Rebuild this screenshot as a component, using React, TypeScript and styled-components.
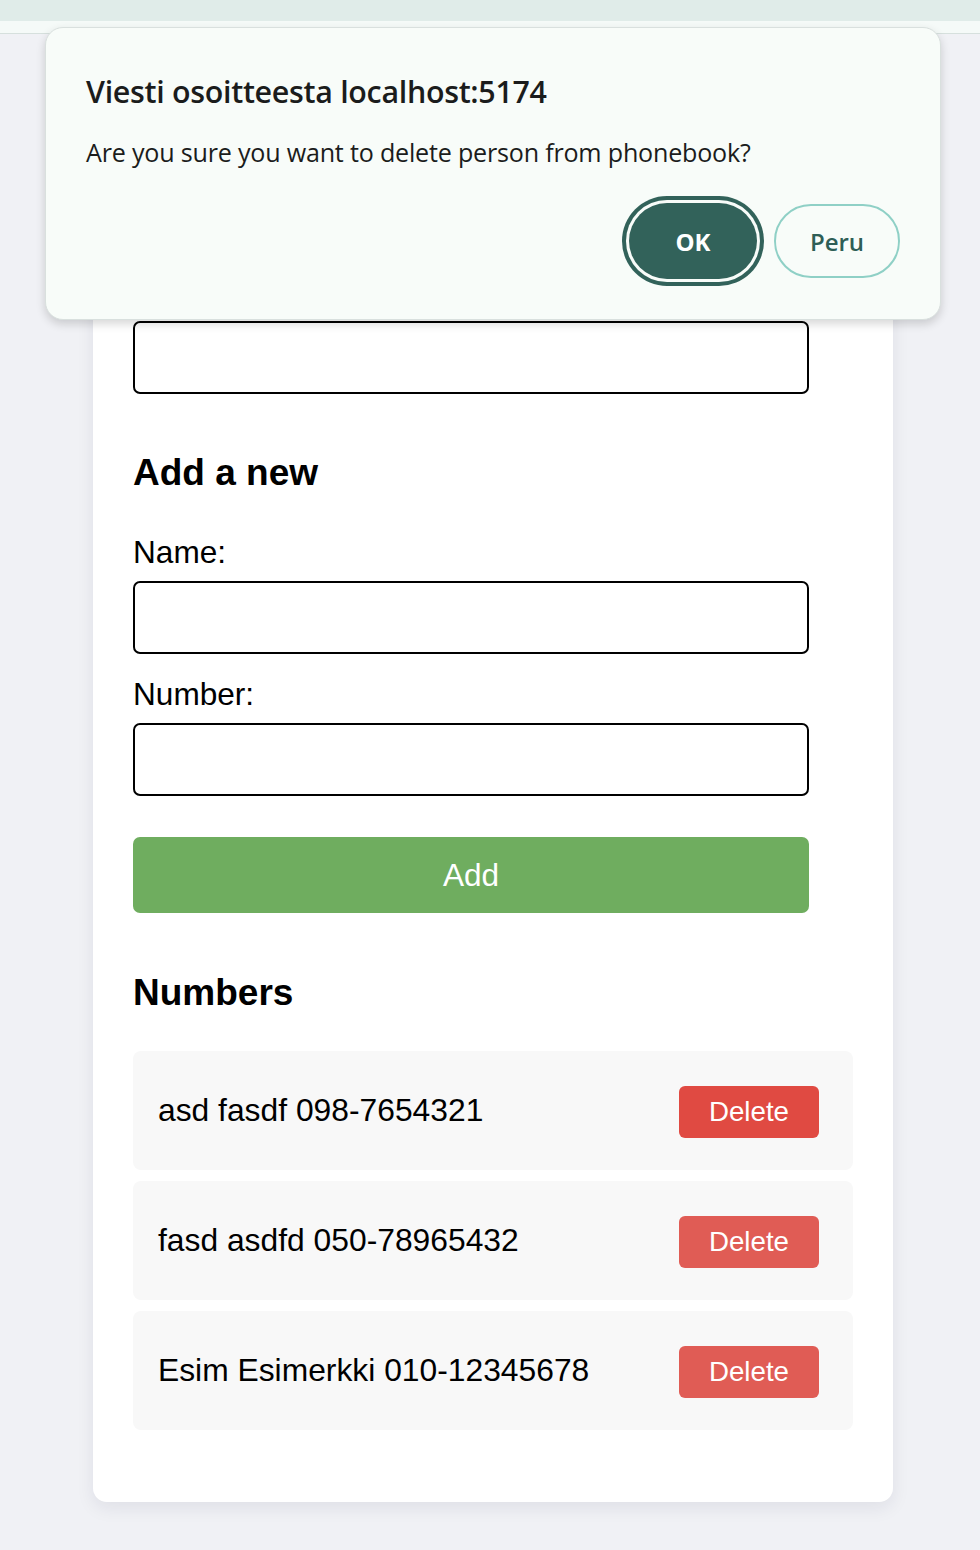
import React from "react";
import styled, { createGlobalStyle } from "styled-components";

const Global = createGlobalStyle`
  html, body { margin: 0; padding: 0; background: #f0f1f5; }
  body { font-family: "Liberation Sans", Arial, sans-serif; color: #000; }
  * { box-sizing: border-box; }
`;

const Page = styled.div`
  position: relative;
  width: 980px;
  height: 1550px;
  overflow: hidden;
`;

const ChromeBar = styled.div`
  height: 21px;
  background: #e0ece9;
`;

const ChromeStrip = styled.div`
  height: 13px;
  background: #f5faf8;
  border-bottom: 1px solid #d6e0dd;
`;

const Card = styled.main`
  width: 800px;
  margin: 217px 0 0 93px;
  background: #fff;
  border-radius: 14px;
  box-shadow: 0 6px 18px rgba(20, 30, 60, 0.08);
  padding: 70px 40px 72px 40px;
`;

const Heading = styled.h2<{ $top: number; $bottom: number }>`
  margin: ${(p) => p.$top}px 0 ${(p) => p.$bottom}px;
  font-size: 37px;
  line-height: 42px;
  font-weight: 700;
`;

const Label = styled.label`
  display: block;
  font-size: 31.6px;
  line-height: 37px;
  margin-bottom: 10px;
`;

const Field = styled.div<{ $gap: number }>`
  margin-bottom: ${(p) => p.$gap}px;
`;

const Input = styled.input`
  display: block;
  width: 676px;
  height: 73px;
  border: 2px solid #000;
  border-radius: 7px;
  background: #fff;
  font-size: 28px;
  padding: 0 12px;
  outline: none;
`;

const AddButton = styled.button`
  display: block;
  width: 676px;
  height: 76px;
  margin-top: 41px;
  border: none;
  border-radius: 7px;
  background: #6fad5f;
  color: #fff;
  font-family: "Liberation Sans", Arial, sans-serif;
  font-size: 31.6px;
`;

const List = styled.ul`
  list-style: none;
  margin: 0;
  padding: 0;
  display: flex;
  flex-direction: column;
  gap: 11px;
`;

const Row = styled.li`
  height: 119px;
  background: #f8f8f8;
  border-radius: 8px;
  display: flex;
  align-items: center;
  justify-content: space-between;
  padding: 0 34px 0 25px;
  font-size: 31.8px;
`;

const DeleteButton = styled.button<{ $primary?: boolean }>`
  width: 140px;
  height: 52px;
  border: none;
  border-radius: 6px;
  background: ${(p) => (p.$primary ? "#e04a42" : "#e05c55")};
  color: #fff;
  font-family: "Liberation Sans", Arial, sans-serif;
  font-size: 27.7px;
  margin-top: 2px;
`;

const Dialog = styled.div`
  position: absolute;
  top: 27px;
  left: 45px;
  width: 896px;
  height: 293px;
  background: #f8fcf9;
  border: 1px solid #d9e0de;
  border-radius: 18px;
  box-shadow: 0 4px 10px rgba(0, 0, 0, 0.16);
  padding: 0 40px 0 40px;
  font-family: "Open Sans", "Noto Sans", sans-serif;
  color: #1b1c1c;
`;

const DialogTitle = styled.div`
  margin-top: 44px;
  font-size: 30.4px;
  font-weight: 600;
  line-height: 40px;
  letter-spacing: -0.3px;
`;

const DialogText = styled.div`
  margin-top: 24px;
  font-size: 25.1px;
  line-height: 32px;
  letter-spacing: -0.2px;
`;

const Actions = styled.div`
  display: flex;
  justify-content: flex-end;
  align-items: center;
  gap: 17px;
  margin-top: 35px;
`;

const OkButton = styled.button`
  width: 128px;
  height: 76px;
  border: none;
  border-radius: 38px;
  background: #32625a;
  color: #fff;
  font-family: "Open Sans", "Noto Sans", sans-serif;
  font-weight: 700;
  font-size: 24px;
  box-shadow: 0 0 0 3px #f8fcf9, 0 0 0 7px #32625a;
`;

const CancelButton = styled.button`
  width: 126px;
  height: 74px;
  border: 2px solid #8fd0c6;
  border-radius: 37px;
  background: #f8fcf9;
  color: #2e5e56;
  font-family: "Open Sans", "Noto Sans", sans-serif;
  font-weight: 600;
  font-size: 24px;
`;

const persons = [
  { name: "asd fasdf", number: "098-7654321" },
  { name: "fasd asdfd", number: "050-78965432" },
  { name: "Esim Esimerkki", number: "010-12345678" },
];

export default function App() {
  return (
    <Page>
      <Global />
      <ChromeBar />
      <ChromeStrip />
      <Card>
        <Input aria-label="filter shown with" />
        <Heading $top={58} $bottom={40}>
          Add a new
        </Heading>
        <form onSubmit={(e) => e.preventDefault()}>
          <Field $gap={22}>
            <Label>Name:</Label>
            <Input />
          </Field>
          <Field $gap={0}>
            <Label>Number:</Label>
            <Input />
          </Field>
          <AddButton type="submit">Add</AddButton>
        </form>
        <Heading $top={59} $bottom={37}>
          Numbers
        </Heading>
        <List>
          {persons.map((p, i) => (
            <Row key={p.number}>
              <span>
                {p.name} {p.number}
              </span>
              <DeleteButton $primary={i === 0}>Delete</DeleteButton>
            </Row>
          ))}
        </List>
      </Card>
      <Dialog role="alertdialog">
        <DialogTitle>Viesti osoitteesta localhost:5174</DialogTitle>
        <DialogText>Are you sure you want to delete person from phonebook?</DialogText>
        <Actions>
          <OkButton>OK</OkButton>
          <CancelButton>Peru</CancelButton>
        </Actions>
      </Dialog>
    </Page>
  );
}
